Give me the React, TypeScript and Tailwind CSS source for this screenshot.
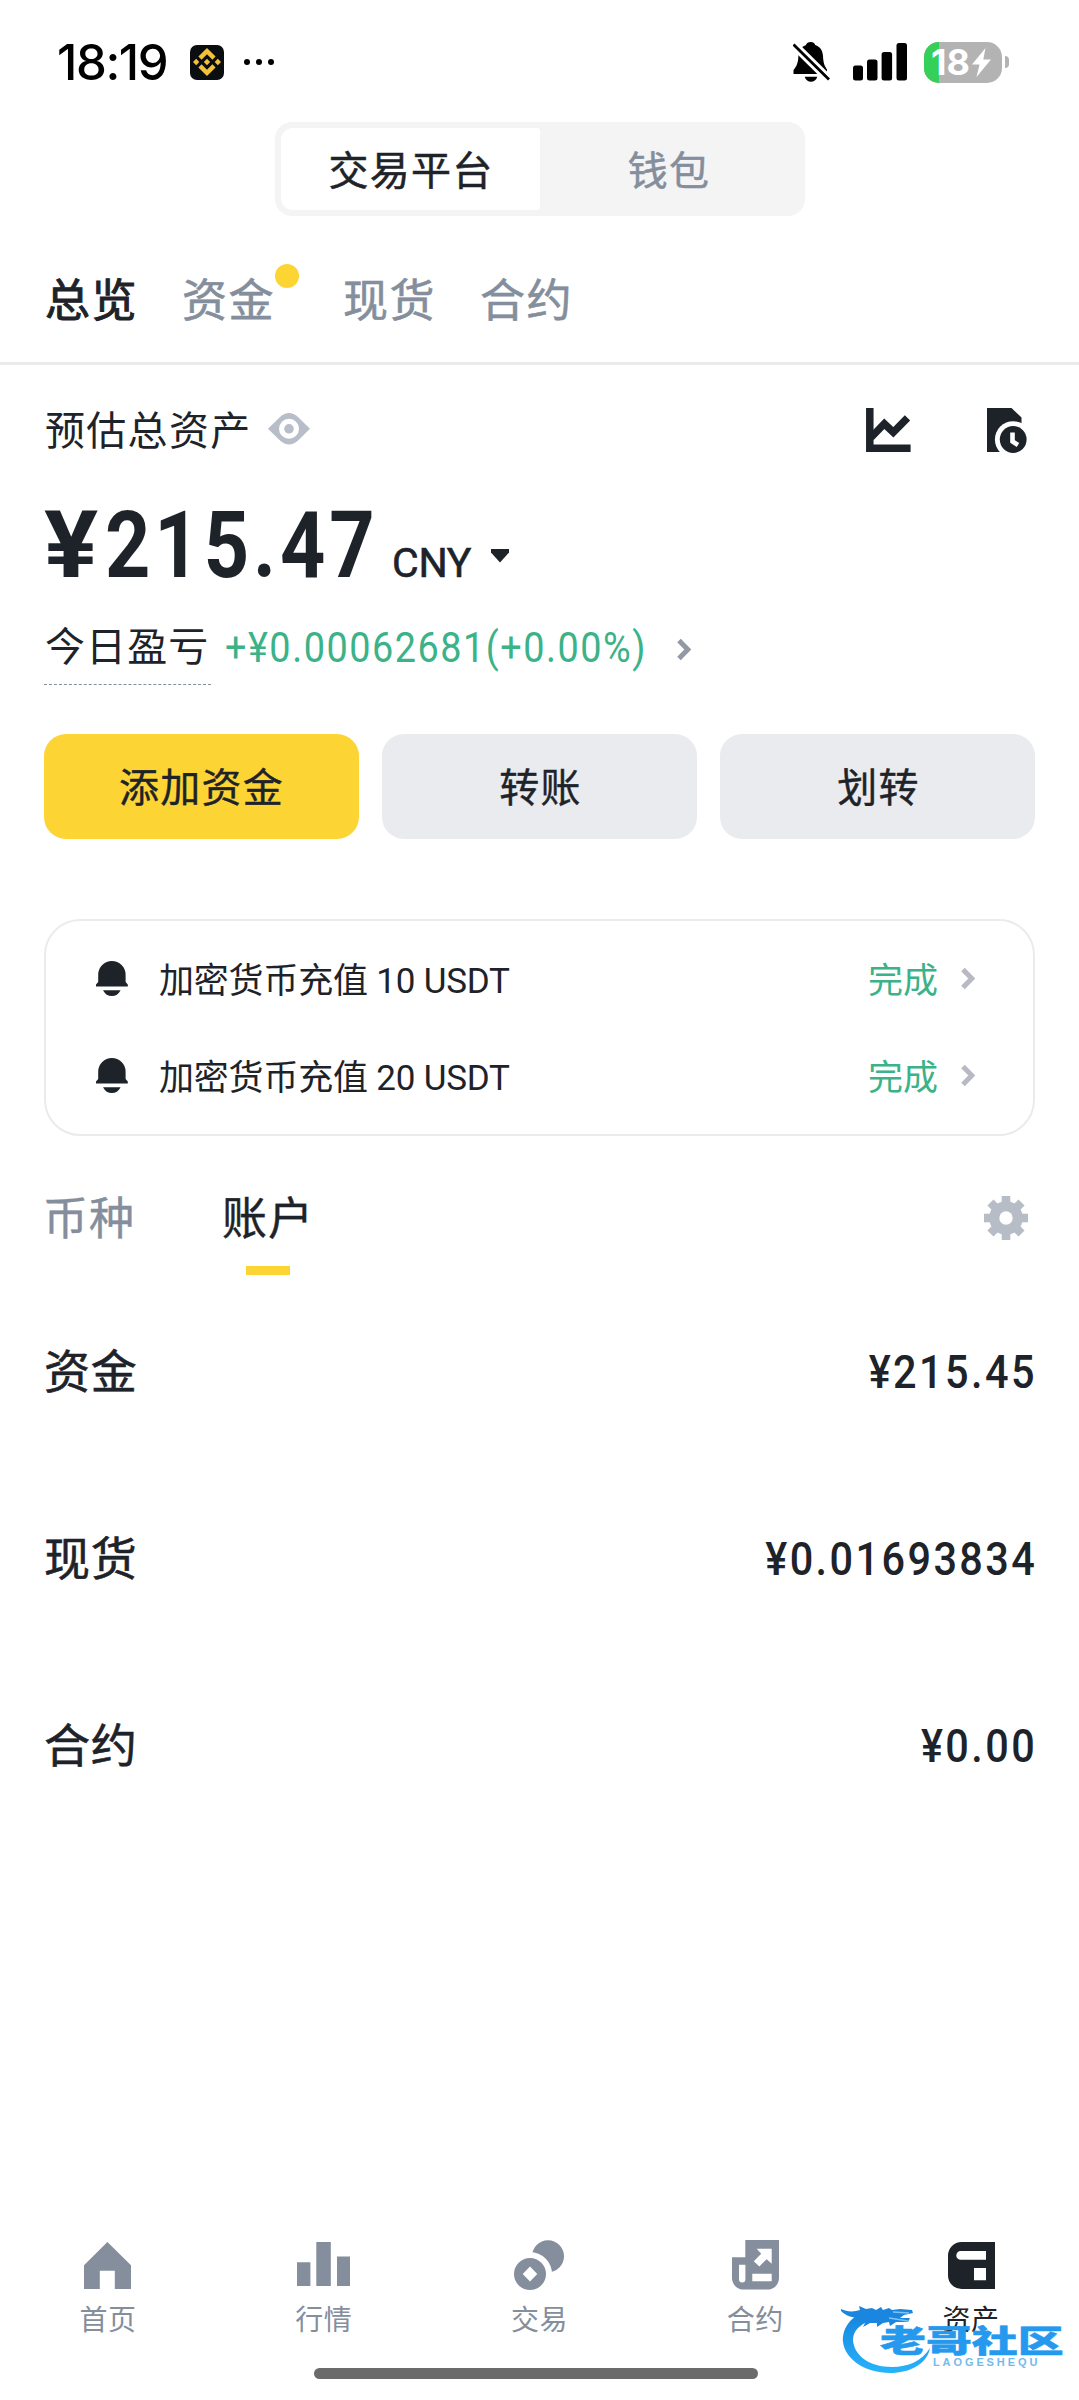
import { useState } from "react";
import type { ReactNode } from "react";
import { SiBinance } from "react-icons/si";

const DARK = "#1e2329";
const GRAY = "#848e9c";

const topTabs = [
  { label: "总览", badge: false },
  { label: "资金", badge: true },
  { label: "现货", badge: false },
  { label: "合约", badge: false },
];

const notices = ["加密货币充值 10 USDT", "加密货币充值 20 USDT"];

const accounts = [
  { name: "资金", amount: "¥215.45" },
  { name: "现货", amount: "¥0.01693834" },
  { name: "合约", amount: "¥0.00" },
];

function BellOffIcon() {
  return (
    <svg width="37" height="40" viewBox="0 0 37 40">
      <path
        d="M17.700 0c2.400 0 4 1.300 4.500 3 5 1.800 7.500 5.500 7.800 11 .3 6.500 1.200 9.500 4 13.500v4.500H.5v-4C3.500 24.500 5.200 21 5.400 14 5.800 7.500 9 4.500 13 3c.6-1.700 2.300-3 4.700-3z"
        fill="#000"
      />
      <path d="M11.700 34.700h12.600c-1 3.400-3.500 5-6.300 5s-5.300-1.600-6.300-5z" fill="#000" />
      <path d="M-2 0L38 39.500" stroke="#fff" strokeWidth="8.500" />
      <path d="M.5 2.500L36 37.500" stroke="#000" strokeWidth="2.800" />
    </svg>
  );
}

function SignalIcon() {
  return (
    <svg width="54" height="38" viewBox="0 0 54 38">
      <rect x="0" y="22.500" width="10" height="15" rx="2.500" />
      <rect x="14" y="16.500" width="10.500" height="21" rx="2.500" />
      <rect x="28.600" y="9" width="10.500" height="28.500" rx="2.500" />
      <rect x="43.500" y="0" width="10.500" height="37.500" rx="2.500" />
    </svg>
  );
}

function Battery() {
  return (
    <div className="flex items-center gap-[3px]">
      <div className="relative flex h-[41px] w-[78px] items-center overflow-hidden rounded-[15px] bg-[#b3b3b3] pl-[7px]">
        <div className="absolute inset-y-0 left-0 w-[15px] bg-[#34d058]" />
        <span className="relative font-[Inter] text-[36px] leading-none font-bold text-white">18</span>
        <svg className="relative ml-[2px]" width="19" height="29" viewBox="0 0 19 29">
          <path d="M13.500 0L0 16.500h7.500L4.500 29 19 11.500h-7.700z" fill="#fff" />
        </svg>
      </div>
      <div className="h-[12px] w-[4px] rounded-r-full bg-[#b3b3b3]" />
    </div>
  );
}

function EyeIcon() {
  return (
    <svg width="42" height="32" viewBox="0 0 42 32">
      <path d="M0 15.700L12 4Q21-4 30 4l12 11.700L30 27.500q-9 8-18 0z" fill="#b7bdc9" />
      <circle cx="21" cy="15.800" r="7.400" fill="none" stroke="#fff" strokeWidth="5.200" />
    </svg>
  );
}

function ChartIcon() {
  return (
    <svg width="45" height="44" viewBox="0 0 45 44" fill="none" stroke={DARK} strokeWidth="7.500">
      <path d="M3.800 0v40.200h40.800" />
      <path d="M5 29.500l13.300-13.800 9 8.600L41.500 9.800" />
    </svg>
  );
}

function HistoryIcon() {
  return (
    <svg width="40" height="45" viewBox="0 0 40 45">
      <path d="M0 0h24.500l10 9.500V44H0z" fill={DARK} />
      <circle cx="26.200" cy="31.500" r="18.300" fill="#fff" />
      <circle cx="26.200" cy="31.500" r="13.400" fill={DARK} />
      <path d="M25.500 24.500v9l5.500 3.500" fill="none" stroke="#fff" strokeWidth="4.600" />
    </svg>
  );
}

function BellIcon() {
  return (
    <svg width="32" height="35" viewBox="0 0 32 35" fill={DARK}>
      <path d="M2.200 21v-7.500a13.700 13.500 0 0 1 27.400 0V21l2.200 2.500v2H0v-2z" />
      <path d="M7 29.200h17.600c-2 4-5 5.800-8.800 5.800S9 33.200 7 29.200z" />
    </svg>
  );
}

function GearIcon() {
  return (
    <svg width="44" height="44" viewBox="-22 -22 44 44">
      <circle r="16.800" fill="#b7bdc6" />
      {[0, 45, 90, 135].map((deg) => (
        <rect key={deg} x="-4.300" y="-22" width="8.600" height="44" fill="#b7bdc6" transform={`rotate(${deg})`} />
      ))}
      <circle r="6.700" fill="#fff" />
    </svg>
  );
}

function Chevron({ color }: { color: string }) {
  return (
    <svg width="15" height="23" viewBox="0 0 15 23" fill="none">
      <path d="M2 2.500l8.800 9L2 20.500" stroke={color} strokeWidth="5" />
    </svg>
  );
}

function HomeIcon() {
  return (
    <svg width="47" height="47" viewBox="0 0 47 47" fill={GRAY}>
      <path d="M0 23.300L23.400 0 47 23.300V47H30.800V28.700h-15V47H0z" />
    </svg>
  );
}

function MarketIcon() {
  return (
    <svg width="53" height="46" viewBox="0 0 53 46" fill={GRAY}>
      <path d="M0 20.300h13.400V44H0zM19.300 0h14.500v44H19.300zM40 14.500h13V44H40z" />
    </svg>
  );
}

function TradeIcon() {
  return (
    <svg width="50" height="50" viewBox="0 0 50 50" fill={GRAY}>
      <circle cx="34" cy="16.200" r="16" />
      <circle cx="16" cy="34" r="22" fill="#fff" />
      <circle cx="16" cy="34" r="16" />
      <path d="M16 26.500l7.300 7.500-7.300 7.500L8.700 34z" fill="#fff" />
    </svg>
  );
}

function FuturesIcon() {
  return (
    <svg width="47" height="50" viewBox="0 0 47 50">
      <path
        d="M13.300 0H47v38a11.600 11.600 0 0 1-11.600 11.600H11.600A11.600 11.600 0 0 1 0 38V17.300h13.300z"
        fill={GRAY}
      />
      <path d="M7 24.700h6.400v14.600a3.200 3.200 0 0 1-6.400 0zM20.300 33.700h19.400v7.600H20.300z" fill="#fff" />
      <path d="M24.700 8.700h15v15l-5-4.500-7.400 7.300-5.500-5.300 7.400-7.400z" fill="#fff" />
    </svg>
  );
}

function WalletIcon() {
  return (
    <svg width="47" height="47" viewBox="0 0 47 47">
      <path d="M13.500 0H47v47H13.500A13.500 13.500 0 0 1 0 33.500v-20A13.500 13.500 0 0 1 13.500 0z" fill={DARK} />
      <path d="M12.700 9H38v8.800H12.700a4.400 4.400 0 0 1 0-8.800zM26 26h12v12.300H26z" fill="#fff" />
    </svg>
  );
}

const navItems: { label: string; icon: ReactNode; active?: boolean }[] = [
  { label: "首页", icon: <HomeIcon /> },
  { label: "行情", icon: <MarketIcon /> },
  { label: "交易", icon: <TradeIcon /> },
  { label: "合约", icon: <FuturesIcon /> },
  { label: "资产", icon: <WalletIcon />, active: true },
];

function Watermark() {
  return (
    <div className="pointer-events-none absolute top-[2295px] left-[835px] h-[85px] w-[230px]">
      <svg className="absolute top-0 left-0" width="110" height="85" viewBox="0 0 110 85">
        <defs>
          <linearGradient id="dragon" x1="0" y1="0" x2="0" y2="1">
            <stop offset="0" stopColor="#1583dd" />
            <stop offset="1" stopColor="#27b4fb" />
          </linearGradient>
        </defs>
        <path
          d="M30 17C14 22 7 35 8 47c2 17 22 31 47 31 20 0 37-9 40-25-8 13-22 19-38 19-22 0-38-11-39-27 0-9 6-15 18-20z"
          fill="url(#dragon)"
        />
        <path
          d="M6 14c6 3 13 3 19 1l-1-4 7 3 6-1 4 2 5-3 2 3 6-2 3 2 8-1 12 1 1 3-9 2-4 3 10 0-2 4-12 0-6 4-1-4-6 1-6 4 0-4-7 0-7 4 3-6-8 1 2-4c-7 0-14-2-19-7z"
          fill="#1b86df"
        />
        <path d="M58 17l16 1M54 23l19 3" stroke="#7cc4f5" strokeWidth="1.500" />
      </svg>
      <span className="absolute top-[29px] left-[45px] origin-left scale-x-[1.48] font-['Noto_Sans_CJK_SC',sans-serif] text-[31px] leading-[30px] font-black whitespace-nowrap text-[#2599ee] [-webkit-text-stroke:0.5px]">
        老哥社区
      </span>
      <span className="absolute top-[62px] left-[98px] font-['Liberation_Sans',sans-serif] text-[11px] leading-[10px] font-bold tracking-[2.900px] whitespace-nowrap text-[#74bbec]">
        LAOGESHEQU
      </span>
    </div>
  );
}

export default function App() {
  const [tab, setTab] = useState("总览");
  const [view, setView] = useState("账户");

  return (
    <div className="relative flex h-[2400px] w-[1079px] flex-col overflow-hidden bg-white font-[Roboto,'Noto_Sans_CJK_SC',sans-serif] text-[#1e2329]">
      {/* Status bar */}
      <div className="flex h-[122px] shrink-0 items-center pt-[2px] pr-[70px] pl-[57px]">
        <span className="w-[133px] font-[Inter] text-[49px] leading-none font-medium tracking-[-1.400px] text-black">
          18:19
        </span>
        <div className="flex h-[35px] w-[34px] items-center justify-center rounded-[7px] bg-[#0b0e11]">
          <SiBinance size={28} color="#f3c13a" />
        </div>
        <div className="ml-[20px] flex gap-[6px]">
          <span className="h-[6px] w-[6px] rounded-full bg-black" />
          <span className="h-[6px] w-[6px] rounded-full bg-black" />
          <span className="h-[6px] w-[6px] rounded-full bg-black" />
        </div>
        <div className="ml-auto flex items-center">
          <BellOffIcon />
          <span className="ml-[23px]">
            <SignalIcon />
          </span>
          <span className="ml-[17px]">
            <Battery />
          </span>
        </div>
      </div>

      {/* Exchange / wallet switch */}
      <div className="mx-auto flex h-[94px] w-[530px] shrink-0 rounded-[17px] bg-[#f4f4f4] p-[6px] text-[40px] tracking-[1.300px] [-webkit-text-stroke:0.5px]">
        <button className="w-[259px] rounded-l-[12px] rounded-r-[3px] bg-white pt-[6px] pl-[2px]">交易平台</button>
        <button className="flex-1 pt-[6px] text-[#848e9c]">钱包</button>
      </div>

      {/* Account tabs */}
      <div className="flex h-[149px] shrink-0 items-center border-b-3 border-[#ebebeb] pt-[26px] pl-[45px] text-[45px] tracking-[1.500px]">
        {topTabs.map((t) => (
          <button
            key={t.label}
            onClick={() => setTab(t.label)}
            className={`relative mr-[44px] ${t.badge ? "pr-[24px]" : ""} ${
              tab === t.label
                ? "text-[#1e2329] [-webkit-text-stroke:1px]"
                : "text-[#848e9c] [-webkit-text-stroke:0.6px]"
            }`}
          >
            {t.label}
            {t.badge && (
              <span className="absolute top-[-4px] right-0 h-[24px] w-[24px] rounded-full bg-[#fcd535]" />
            )}
          </button>
        ))}
      </div>

      {/* Balance */}
      <div className="flex h-[130px] shrink-0 items-center pr-[52px] pl-[45px]">
        <span className="pt-[4px] text-[40px] tracking-[1.300px]">预估总资产</span>
        <span className="-mt-[2px] ml-[16px]">
          <EyeIcon />
        </span>
        <div className="ml-auto flex gap-[76px]">
          <ChartIcon />
          <HistoryIcon />
        </div>
      </div>

      <div className="flex h-[98px] shrink-0 items-baseline pt-[2px] pl-[44px] leading-[98px] whitespace-nowrap">
        <span className="w-[61px] origin-left scale-x-[1.1] text-[92px] font-bold">¥</span>
        <span className="w-[287px] origin-left scale-x-[0.86] text-[92px] font-bold tracking-[4.600px]">215.47</span>
        <span className="w-[79px] text-[41px] tracking-[-0.300px] [-webkit-text-stroke:0.6px]">CNY</span>
        <svg className="mt-[22px] ml-[20px] self-center" width="18" height="14" viewBox="0 0 18 14">
          <path d="M0 0h18v3.500L9 13.500 0 3.500z" fill={DARK} />
        </svg>
      </div>

      <div className="flex h-[141px] shrink-0 items-start pt-[14px] pl-[44px]">
        <span className="flex h-[78px] w-[167px] items-center border-b border-dashed border-[#848e9c] pt-[4px] pl-px text-[40px] tracking-[1.100px]">
          今日盈亏
        </span>
        <div className="flex h-[80px] items-center pl-[14px]">
          <span className="w-[452px] origin-left scale-x-90 text-[42px] tracking-[1.700px] whitespace-nowrap text-[#3bb287]">
            +¥0.00062681(+0.00%)
          </span>
          <span className="pt-[4px]">
            <Chevron color="#9299a5" />
          </span>
        </div>
      </div>

      <div className="grid h-[105px] shrink-0 grid-cols-3 gap-[23px] px-[44px] text-[40px] tracking-[1.300px] [-webkit-text-stroke:0.4px]">
        <button className="rounded-[22px] bg-[#fcd535] pt-[4px]">添加资金</button>
        <button className="rounded-[22px] bg-[#eaebef] pt-[4px] pl-[2px]">转账</button>
        <button className="rounded-[22px] bg-[#eaebef] pt-[4px] pl-[2px]">划转</button>
      </div>

      {/* Notifications */}
      <div className="mx-[44px] mt-[80px] h-[217px] shrink-0 rounded-[36px] border-2 border-[#ebebeb] pt-[9px]">
        {notices.map((text) => (
          <div key={text} className="flex h-[97px] items-center pr-[57px] pl-[50px] text-[35px]">
            <BellIcon />
            <span className="ml-[31px] pt-[8px] tracking-[-0.200px]">{text}</span>
            <span className="mr-[23px] ml-auto pt-[8px] text-[#3bb287]">完成</span>
            <Chevron color="#b7bac4" />
          </div>
        ))}
      </div>

      {/* Coins / accounts */}
      <div className="flex h-[142px] shrink-0 items-start justify-between pr-[51px] pl-[43px]">
        <div className="flex gap-[87px] text-[45px] tracking-[1px]">
          {["币种", "账户"].map((label) => (
            <button
              key={label}
              onClick={() => setView(label)}
              className={`flex h-[139px] flex-col items-center [-webkit-text-stroke:0.4px] ${
                view === label ? "text-[#1e2329]" : "text-[#848e9c]"
              }`}
            >
              <span className="flex h-[130px] items-center pt-[38px]">{label}</span>
              {view === label && <span className="h-[9px] w-[44px] bg-[#fcd535]" />}
            </button>
          ))}
        </div>
        <div className="pt-[60px]">
          <GearIcon />
        </div>
      </div>

      <div className="shrink-0 px-[44px] text-[46px]">
        {accounts.map((a) => (
          <div key={a.name} className="flex h-[187px] items-center justify-between pt-px">
            <span className="tracking-[0.800px] [-webkit-text-stroke:0.6px]">{a.name}</span>
            <span className="-mr-[2px] origin-right scale-x-[0.9] font-medium tracking-[2.700px]">{a.amount}</span>
          </div>
        ))}
      </div>

      {/* Bottom navigation */}
      <nav className="mt-auto grid h-[129px] shrink-0 grid-cols-5">
        {navItems.map((item) => (
          <button
            key={item.label}
            className={`flex flex-col items-center text-[28px] leading-[40px] tracking-[0.500px] ${
              item.active ? "text-[#1e2329]" : "text-[#848e9c]"
            }`}
          >
            <span className="mb-[5px] flex h-[62px] items-center">{item.icon}</span>
            {item.label}
          </button>
        ))}
      </nav>
      <div className="mt-[5px] mb-[21px] ml-[314px] h-[11px] w-[444px] shrink-0 rounded-full bg-[#6b6b6b]" />

      <Watermark />
    </div>
  );
}
